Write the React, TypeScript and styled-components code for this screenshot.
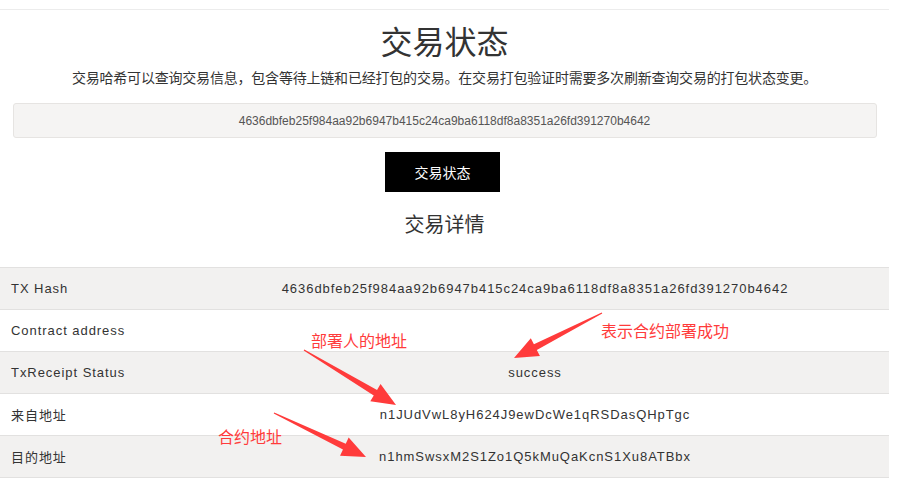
import React from "react";
import styled, { createGlobalStyle } from "styled-components";

const GlobalStyle = createGlobalStyle`
  html, body {
    margin: 0;
    padding: 0;
    background: #fff;
  }
  body {
    font-family: "Liberation Sans", Arial, "Noto Sans CJK SC", sans-serif;
    color: #333;
  }
`;

type Row = { label: string; value: string };

const rows: Row[] = [
  { label: "TX Hash", value: "4636dbfeb25f984aa92b6947b415c24ca9ba6118df8a8351a26fd391270b4642" },
  { label: "Contract address", value: "" },
  { label: "TxReceipt Status", value: "success" },
  { label: "来自地址", value: "n1JUdVwL8yH624J9ewDcWe1qRSDasQHpTgc" },
  { label: "目的地址", value: "n1hmSwsxM2S1Zo1Q5kMuQaKcnS1Xu8ATBbx" },
];

type Note = { text: string; x: number; y: number };

const notes: Note[] = [
  { text: "部署人的地址", x: 311, y: 329 },
  { text: "表示合约部署成功", x: 601, y: 319 },
  { text: "合约地址", x: 218, y: 425 },
];

type Arrow = { from: [number, number]; to: [number, number] };

const arrows: Arrow[] = [
  { from: [304, 350], to: [396, 405] },
  { from: [602, 313], to: [514, 358] },
  { from: [274, 413], to: [366, 457] },
];

// tapered shaft + wide head, like a screenshot-tool arrow
const arrowPoints = ({ from, to }: Arrow) => {
  const [x1, y1] = from;
  const [x2, y2] = to;
  const dx = x2 - x1;
  const dy = y2 - y1;
  const len = Math.hypot(dx, dy);
  const ux = dx / len;
  const uy = dy / len;
  const nx = -uy;
  const ny = ux;
  const headLen = 24;
  const headW = 10;
  const baseW = 3.2;
  const tailW = 0.6;
  const bx = x2 - ux * headLen;
  const by = y2 - uy * headLen;
  const pts: [number, number][] = [
    [x1 + nx * tailW, y1 + ny * tailW],
    [bx + nx * baseW, by + ny * baseW],
    [bx + nx * headW, by + ny * headW],
    [x2, y2],
    [bx - nx * headW, by - ny * headW],
    [bx - nx * baseW, by - ny * baseW],
    [x1 - nx * tailW, y1 - ny * tailW],
  ];
  return pts.map((p) => p.join(",")).join(" ");
};

export default function App() {
  return (
    <Page>
      <GlobalStyle />
      <Container>
        <Title>交易状态</Title>
        <Subtitle>
          交易哈希可以查询交易信息，包含等待上链和已经打包的交易。在交易打包验证时需要多次刷新查询交易的打包状态变更。
        </Subtitle>
        <HashInput
          readOnly
          value="4636dbfeb25f984aa92b6947b415c24ca9ba6118df8a8351a26fd391270b4642"
        />
        <ButtonRow>
          <SearchButton>交易状态</SearchButton>
        </ButtonRow>
        <SectionTitle>交易详情</SectionTitle>
        <Table>
          {rows.map((r, i) => (
            <TableRow key={r.label} $striped={i % 2 === 0}>
              <Label>{r.label}</Label>
              <Value>{r.value}</Value>
            </TableRow>
          ))}
        </Table>
      </Container>

      <Overlay>
        <svg width="897" height="489" viewBox="0 0 897 489">
          {arrows.map((a, i) => (
            <polygon key={i} points={arrowPoints(a)} fill="#ff3b3b" />
          ))}
        </svg>
        {notes.map((n) => (
          <NoteText key={n.text} style={{ left: n.x, top: n.y }}>
            {n.text}
          </NoteText>
        ))}
      </Overlay>
    </Page>
  );
}

const Page = styled.div`
  position: relative;
  width: 897px;
  min-height: 489px;
  padding-top: 9px;
  box-sizing: border-box;
`;

const Container = styled.div`
  width: 889px;
  border-top: 1px solid #ececec;
  display: flex;
  flex-direction: column;
  align-items: center;
`;

const Title = styled.h1`
  margin: 15px 0 0;
  font-family: "Liberation Sans", "Noto Sans CJK SC", sans-serif;
  font-size: 32px;
  line-height: 36px;
  font-weight: 400;
  color: #333;
`;

const Subtitle = styled.p`
  margin: 7px 0 0;
  font-size: 14px;
  line-height: 20px;
  letter-spacing: -0.2px;
  color: #333;
  font-family: "Liberation Sans", "Noto Sans CJK SC", sans-serif;
`;

const HashInput = styled.input`
  margin-top: 15px;
  width: 864px;
  height: 35px;
  box-sizing: border-box;
  border: 1px solid #e6e4e2;
  border-radius: 3px;
  background: #f5f4f3;
  font-family: "Liberation Sans", Arial, sans-serif;
  font-size: 12px;
  color: #555;
  text-align: center;
  outline: none;
  padding: 0 10px;
`;

const ButtonRow = styled.div`
  margin-top: 14px;
  display: flex;
  justify-content: center;
  width: 100%;
`;

const SearchButton = styled.button`
  width: 115px;
  height: 40px;
  margin-right: 4px;
  border: none;
  background: #000;
  color: #fff;
  font-family: "Liberation Sans", "Noto Sans CJK SC", sans-serif;
  font-size: 14px;
  cursor: pointer;
`;

const SectionTitle = styled.h2`
  margin: 19px 0 0;
  font-family: "Liberation Sans", "Noto Sans CJK SC", sans-serif;
  font-size: 20px;
  line-height: 28px;
  font-weight: 400;
  color: #333;
`;

const Table = styled.div`
  margin-top: 28px;
  width: 100%;
  border-bottom: 1px solid #e2e1e0;
`;

const TableRow = styled.div<{ $striped: boolean }>`
  display: grid;
  grid-template-columns: 181px 1fr;
  align-items: center;
  height: 42px;
  box-sizing: border-box;
  border-top: 1px solid #e2e1e0;
  background: ${(p) => (p.$striped ? "#f2f1f0" : "#fff")};
  font-size: 13px;
  letter-spacing: 0.95px;
  color: #333;
`;

const Label = styled.div`
  padding-left: 11px;
  font-family: "Liberation Sans", "Noto Sans CJK SC", sans-serif;
`;

const Value = styled.div`
  text-align: center;
  font-family: "Liberation Sans", "Noto Sans CJK SC", sans-serif;
`;

const Overlay = styled.div`
  position: absolute;
  inset: 0;
  pointer-events: none;

  svg {
    position: absolute;
    left: 0;
    top: 0;
  }
`;

const NoteText = styled.span`
  position: absolute;
  font-family: "Noto Sans CJK SC", sans-serif;
  font-size: 16px;
  line-height: 22px;
  color: #ff3b3b;
  white-space: nowrap;
`;
